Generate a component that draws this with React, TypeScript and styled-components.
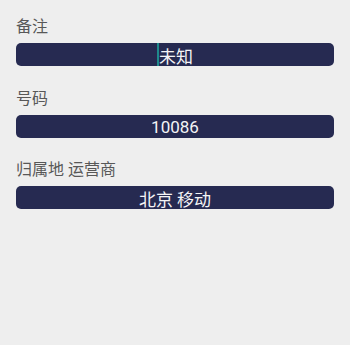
import React from "react";
import styled, { createGlobalStyle } from "styled-components";

const Global = createGlobalStyle`
  html, body { margin: 0; padding: 0; background: #eeeeee; }
  body { font-family: Roboto, "Noto Sans CJK SC", sans-serif; }
`;

const Screen = styled.div`
  width: 350px;
  height: 345px;
  box-sizing: border-box;
  background: #eeeeee;
  padding: 17px 16px 0 16px;
  display: flex;
  flex-direction: column;
  gap: 22.5px;
`;

const Field = styled.div`
  display: flex;
  flex-direction: column;
  gap: 6px;
`;

const Label = styled.div`
  font-family: Roboto, "Noto Sans CJK SC", sans-serif;
  font-size: 16px;
  line-height: 20px;
  color: #585858;
`;

const Value = styled.div`
  height: 23px;
  box-sizing: border-box;
  padding-top: 2px;
  border-radius: 5px;
  background: #262a51;
  color: #f4f4f6;
  font-family: Roboto, "Noto Sans CJK SC", sans-serif;
  font-size: 17px;
  display: flex;
  align-items: center;
  justify-content: center;
  position: relative;
`;

const Caret = styled.span`
  align-self: stretch;
  width: 2px;
  margin-top: -2px;
  background: #1f8a8c;
  margin-right: 0px;
`;

const fields = [
  { label: "备注", value: "未知", caret: true },
  { label: "号码", value: "10086" },
  { label: "归属地 运营商", value: "北京 移动" },
];

export default function App() {
  return (
    <>
      <Global />
      <Screen>
        {fields.map((f) => (
          <Field key={f.label}>
            <Label>{f.label}</Label>
            <Value>
              {f.caret && <Caret />}
              <span>{f.value}</span>
            </Value>
          </Field>
        ))}
      </Screen>
    </>
  );
}
